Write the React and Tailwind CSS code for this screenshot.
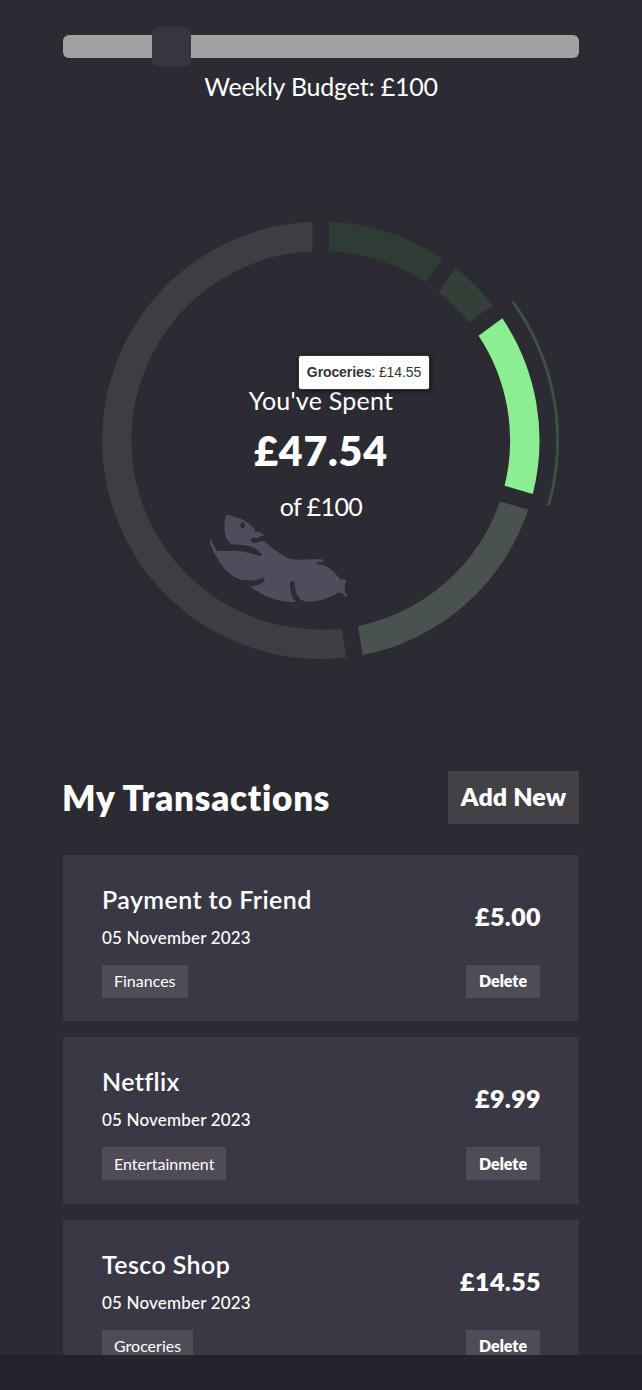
import { useState } from 'react';

const spending = [
  { name: 'Entertainment', amount: 9.99, color: '#2f3c35' },
  { name: 'Finances', amount: 5, color: '#324038' },
  { name: 'Groceries', amount: 14.55, color: '#8bee93' },
  { name: 'Bills', amount: 18, color: '#49524f' },
  { name: 'Remaining', amount: 52.46, color: '#3f3d42' },
];

const transactions = [
  { title: 'Payment to Friend', date: '05 November 2023', category: 'Finances', amount: '£5.00' },
  { title: 'Netflix', date: '05 November 2023', category: 'Entertainment', amount: '£9.99' },
  { title: 'Tesco Shop', date: '05 November 2023', category: 'Groceries', amount: '£14.55' },
];

const OUTER = 218.7;
const INNER = 189.3;
const HALF_GAP = 8.2;

const point = (radius, angle) =>
  `${(radius * Math.sin(angle)).toFixed(2)} ${(-radius * Math.cos(angle)).toFixed(2)}`;

// The gap between slices keeps the same width from the inner to the outer edge
const slicePath = (start, end) => {
  const outerPad = Math.asin(HALF_GAP / OUTER);
  const innerPad = Math.asin(HALF_GAP / INNER);
  const large = end - start > Math.PI ? 1 : 0;
  return [
    `M${point(OUTER, start + outerPad)}`,
    `A${OUTER} ${OUTER} 0 ${large} 1 ${point(OUTER, end - outerPad)}`,
    `L${point(INNER, end - innerPad)}`,
    `A${INNER} ${INNER} 0 ${large} 0 ${point(INNER, start + innerPad)}Z`,
  ].join('');
};

const Mascot = () => (
  <g transform="translate(-126 60) scale(0.33333)">
    <path
      fill="#4f4c5c"
      d="M97 43C107 46 122 54 133 55C150 61 169 74 181 90L178 96H194L208 107L198 109L188 115L176 113L166 119L172 128H185L198 123L208 124C228 145 258 164 285 176C305 181 330 179 350 178L382 178L386 185L367 187L364 193C382 194 396 199 405 206C418 215 429 230 438 240L447 236L454 242L449 255L450 277L458 287L454 292L445 283L430 277C400 296 372 306 330 305C309 297 300 280 299 248L291 240L285 250C285 278 291 294 303 306C250 306 210 292 165 260C185 258 202 251 210 239L206 234C186 237 177 245 155 240C125 242 105 224 85 202C65 173 48 145 44 122L48 117C54 126 56 144 68 153H132C158 156 176 163 195 168L201 164C187 144 161 135 139 135L107 132C93 119 86 101 89 75C89 61 91 48 97 43Z"
    />
    <ellipse cx="143" cy="76" rx="7" ry="9" fill="#2c2a32" />
  </g>
);

const SpendingChart = () => {
  const total = spending.reduce((sum, item) => sum + item.amount, 0);
  let angle = 0;
  const slices = spending.map((item) => {
    const start = angle;
    angle += (item.amount / total) * Math.PI * 2;
    return { ...item, start, end: angle };
  });
  const active = slices[2];

  return (
    <div className="relative mt-20 h-[516px]">
      <svg className="h-full w-full" viewBox="-258 -258 516 516">
        <g transform="translate(-0.2 0.3)">
          {slices.map((slice) => (
            <path key={slice.name} d={slicePath(slice.start, slice.end)} fill={slice.color} />
          ))}
          <path
            d={`M${point(236.8, active.start + 0.002)}A236.8 236.8 0 0 1 ${point(236.8, active.end - 0.006)}`}
            fill="none"
            stroke="#3c5244"
            strokeWidth="2.8"
          />
        </g>
        <Mascot />
      </svg>
      <div className="absolute inset-0 flex flex-col items-center pt-[202px]">
        <p className="text-[25px] leading-8 tracking-[0.25px]">You've Spent</p>
        <p className="mt-[10px] text-[41px] leading-[50px] font-extrabold tracking-[0.8px]">£47.54</p>
        <p className="mt-[14px] text-[25px] leading-8 tracking-[-0.6px]">of £100</p>
      </div>
      <div className="absolute top-[173px] left-[235px] flex h-[35px] w-[132px] items-center justify-center rounded-[3px] border border-[#333] bg-white font-['Liberation_Sans',sans-serif] text-[14px] tracking-[-0.1px] whitespace-pre text-[#333] shadow-[1px_1px_5px_rgba(0,0,0,0.6)]">
        <b>Groceries</b>: £14.55
      </div>
    </div>
  );
};

const BudgetSlider = ({ budget }) => (
  <div>
    <div className="relative flex h-[39px] items-center">
      <div className="h-[23px] w-full rounded-md bg-[#a1a1a3]" />
      <div className="absolute top-0 left-[89px] h-[39px] w-[39px] rounded-md bg-[#383540]" />
    </div>
    <p className="mt-1 text-center text-[25px] leading-8 tracking-[-0.2px]">Weekly Budget: £{budget}</p>
  </div>
);

const Transaction = ({ title, date, category, amount, onDelete }) => (
  <li className="flex h-[166.6px] shrink-0 justify-between bg-[#3b3845] px-[39px]">
    <div className="flex flex-col items-start pt-7">
      <h3 className="text-[25px] leading-8 font-semibold tracking-[0.4px]">{title}</h3>
      <p className="mt-[11px] text-[17px] leading-6 font-medium tracking-[0.18px]">{date}</p>
      <span className="mt-[15px] flex h-[33px] items-center bg-[#4f4c57] px-3 text-[16px]">{category}</span>
    </div>
    <div className="flex flex-col items-end pt-[45px]">
      <p className="-mr-px text-[25px] leading-8 font-extrabold tracking-[0.4px]">{amount}</p>
      <button onClick={onDelete} className="mt-[33px] h-[33px] w-[74px] bg-[#4f4c57] text-[16px] font-extrabold">
        Delete
      </button>
    </div>
  </li>
);

const App = () => {
  const [items, setItems] = useState(transactions);

  return (
    <div className="h-[1390px] w-[642px] overflow-hidden bg-[#24222a] font-['Lato',sans-serif] text-white [font-variant-ligatures:none]">
      <main className="h-[1355px] overflow-hidden bg-[#2c2a32] px-[63px] pt-[27px]">
        <BudgetSlider budget={100} />
        <SpendingChart />
        <div className="mt-[72.5px] flex items-center justify-between">
          <h2 className="-ml-px text-[35px] leading-[50px] font-extrabold tracking-[0.75px]">My Transactions</h2>
          <button className="h-[53px] w-[131px] bg-[#434146] text-[25px] font-extrabold tracking-[0.1px]">Add New</button>
        </div>
        <ul className="mt-[31px] flex flex-col gap-4">
          {items.map((item) => (
            <Transaction
              key={item.title}
              {...item}
              onDelete={() => setItems(items.filter((other) => other !== item))}
            />
          ))}
        </ul>
      </main>
    </div>
  );
};

export default App;
